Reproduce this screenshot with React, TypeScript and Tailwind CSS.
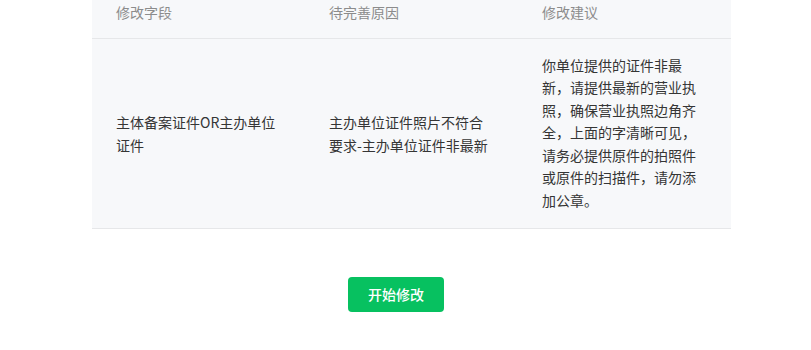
import React from "react";

const font = { fontFamily: '"Noto Sans CJK SC", "Microsoft YaHei", sans-serif' };

export default function App() {
  return (
    <div className="w-[811px] h-[350px] bg-white overflow-hidden" style={font}>
      <div className="ml-[92px] w-[639px]">
        <div className="grid grid-cols-3 h-[39px] bg-[#f7f8fa] border-b border-[#e6e7e9] text-[14px] leading-[22px] text-[#8c8c8c]">
          <div className="pl-6 pt-[1px]">修改字段</div>
          <div className="pl-6 pt-[1px]">待完善原因</div>
          <div className="pl-6 pt-[1px]">修改建议</div>
        </div>
        <div className="grid grid-cols-3 h-[190px] bg-[#f7f8fa] border-b border-[#e6e7e9] text-[14px] text-[#353535]">
          <div className="px-6 flex items-center leading-[22.5px] pt-[-1px]">
            <div>主体备案证件OR主办单位证件</div>
          </div>
          <div className="px-6 flex items-center leading-[22.5px]">
            <div>主办单位证件照片不符合要求-主办单位证件非最新</div>
          </div>
          <div className="px-6 flex items-center leading-[22.5px] pb-[2px]">
            <div>你单位提供的证件非最新，请提供最新的营业执照，确保营业执照边角齐全，上面的字清晰可见，请务必提供原件的拍照件或原件的扫描件，请勿添加公章。</div>
          </div>
        </div>
      </div>
      <div className="flex pt-[48px] pl-[348px]">
        <button className="w-[96px] h-[35px] rounded-[4px] bg-[#07c160] text-white text-[14px] font-medium">
          开始修改
        </button>
      </div>
    </div>
  );
}
